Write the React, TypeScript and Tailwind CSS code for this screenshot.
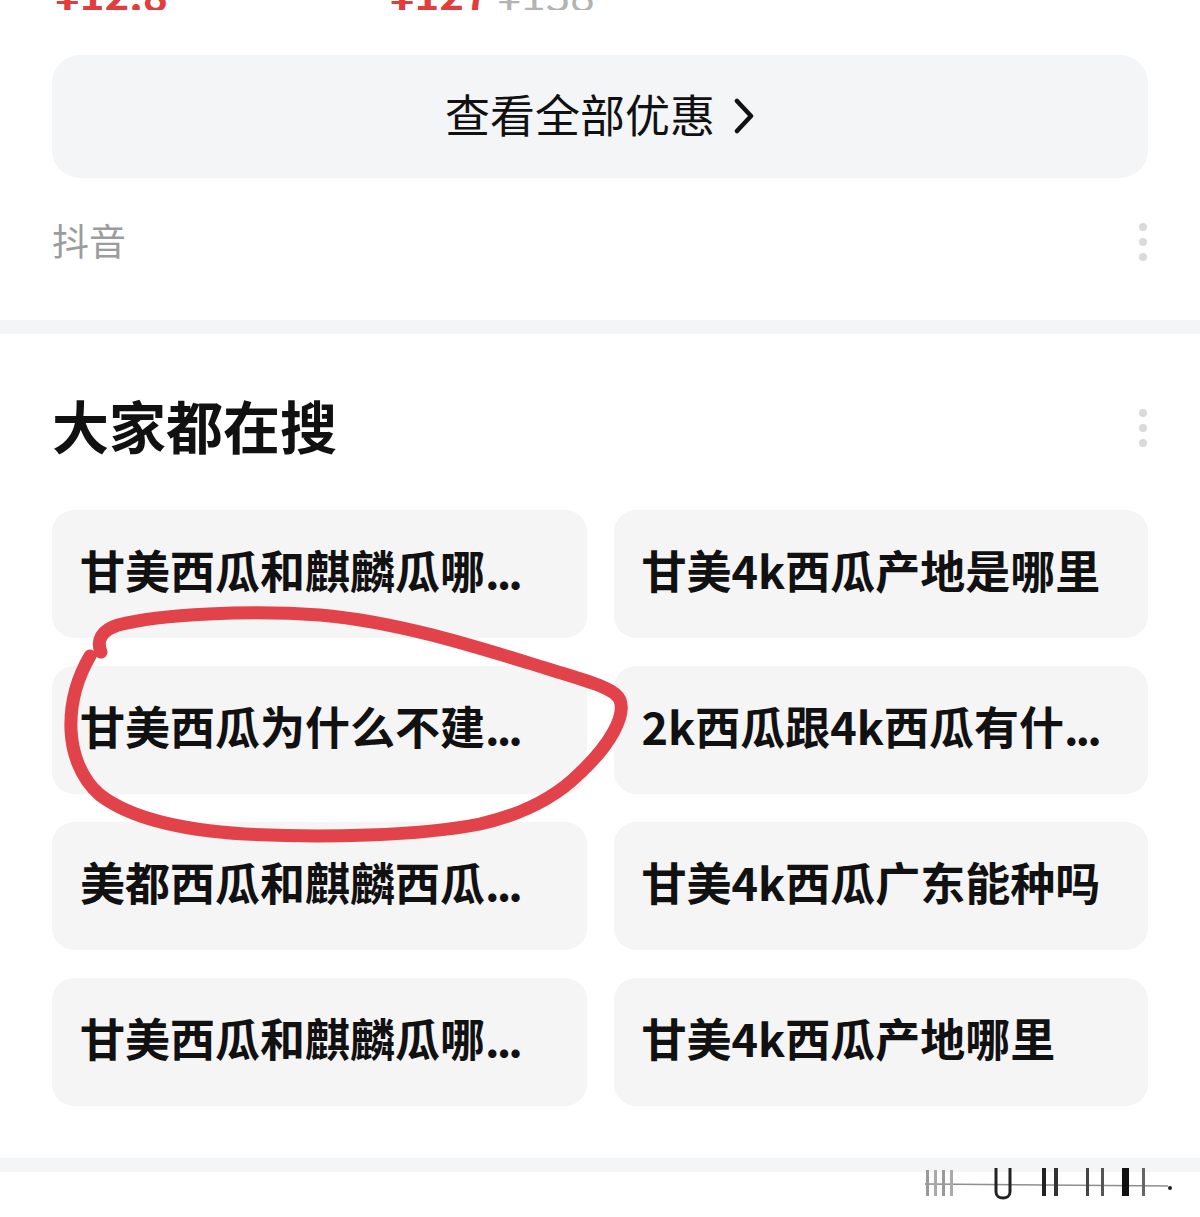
import React from "react";

const items = [
  { text: "甘美西瓜和麒麟瓜哪", more: true },
  { text: "甘美4k西瓜产地是哪里", more: false },
  { text: "甘美西瓜为什么不建", more: true },
  { text: "2k西瓜跟4k西瓜有什", more: true },
  { text: "美都西瓜和麒麟西瓜", more: true },
  { text: "甘美4k西瓜广东能种吗", more: false },
  { text: "甘美西瓜和麒麟瓜哪", more: true },
  { text: "甘美4k西瓜产地哪里", more: false },
];

const MoreDots = () => (
  <div className="flex flex-col items-center gap-[7px] pr-[1px]">
    <span className="block w-[8px] h-[8px] rounded-full bg-[#dadadd]" />
    <span className="block w-[8px] h-[8px] rounded-full bg-[#dadadd]" />
    <span className="block w-[8px] h-[8px] rounded-full bg-[#dadadd]" />
  </div>
);

const App = () => {
  return (
    <div
      className="relative w-[1200px] h-[1217px] bg-white overflow-hidden"
      style={{ fontFamily: "'Noto Sans CJK SC', 'Noto Sans', sans-serif" }}
    >
      <div className="px-[52px]">
        {/* PRICE STRIP (cut off by the screenshot) */}
        <div className="h-[10px] overflow-hidden">
          <div className="-mt-[29px] flex items-baseline leading-[42px]">
            <span className="ml-[3px] text-[42px] font-bold text-[#e03e3e]">¥12.8</span>
            <span className="ml-[222px] text-[42px] font-bold text-[#e03e3e]">¥127</span>
            <span className="ml-[8px] text-[44px] text-[#b3b3b3]">¥138</span>
          </div>
        </div>

        {/* BUTTON */}
        <div className="mt-[45px] h-[123px] rounded-[28px] bg-[#f4f5f7] flex items-center justify-center gap-[18px]">
          <span className="text-[45px] text-[#111] -mt-[5px]">查看全部优惠</span>
          <svg width="22" height="36" viewBox="0 0 22 36" className="-mt-[2px]">
            <path d="M4 3 L18 18 L4 33" fill="none" stroke="#111" strokeWidth="4.5" strokeLinecap="round" strokeLinejoin="round" />
          </svg>
        </div>

        {/* SOURCE */}
        <div className="mt-[40px] h-[48px] flex items-center justify-between">
          <span className="text-[37px] text-[#9c9c9c] -mt-[2px]">抖音</span>
          <MoreDots />
        </div>
      </div>

      {/* DIVIDER */}
      <div className="mt-[54px] h-[14px] bg-[#f4f5f7]" />

      <div className="px-[52px]">
        {/* HEADER */}
        <div className="mt-[64px] h-[60px] flex items-center justify-between">
          <h2 className="text-[57px] font-bold text-[#111] leading-none -mt-[8px]">大家都在搜</h2>
          <MoreDots />
        </div>

        {/* GRID */}
        <div className="mt-[52px] grid grid-cols-2 gap-x-[27px] gap-y-[28px]">
          {items.map((it, i) => (
            <div
              key={i}
              className="h-[128px] rounded-[22px] bg-[#f5f5f6] flex items-center pl-[28px] pb-[9px]"
            >
              <span className="text-[45px] font-bold text-[#111] whitespace-nowrap leading-none">
                {it.text}
                {it.more && <span className="tracking-[-3px]">...</span>}
              </span>
            </div>
          ))}
        </div>
      </div>

      {/* DIVIDER */}
      <div className="mt-[52px] h-[14px] bg-[#f4f5f7]" />

      {/* RED MARKER */}
      <svg
        className="absolute left-0 top-0 pointer-events-none"
        width="1200"
        height="1217"
        viewBox="0 0 1200 1217"
      >
        <path
          d="M101 652 C 96 640, 102 630, 118 625 C 160 614, 250 610, 320 615 C 400 622, 480 648, 545 668 C 590 682, 615 688, 620 700 C 626 716, 610 745, 580 773 C 555 798, 520 815, 480 824 C 420 836, 320 838, 245 834 C 180 830, 130 818, 100 795 C 80 778, 72 752, 71 730 C 70 705, 76 680, 90 656"
          fill="none"
          stroke="#e2434a"
          strokeWidth="13"
          strokeLinecap="round"
          strokeLinejoin="round"
        />
      </svg>

      {/* WATERMARK SCRAP */}
      <svg
        className="absolute left-[920px] top-[1162px] pointer-events-none"
        width="260"
        height="40"
        viewBox="0 0 260 40"
      >
        <line x1="5" y1="22" x2="248" y2="24" stroke="#444" strokeWidth="1.5" opacity="0.6" />
        <rect x="6" y="8" width="3" height="26" fill="#999" />
        <rect x="14" y="8" width="3" height="26" fill="#aaa" />
        <rect x="22" y="8" width="3" height="26" fill="#999" />
        <rect x="30" y="8" width="3" height="26" fill="#aaa" />
        <path d="M76 6 L76 30 C76 38, 90 38, 90 30 L90 6" fill="none" stroke="#222" strokeWidth="3" />
        <rect x="122" y="6" width="4" height="28" fill="#222" />
        <rect x="134" y="6" width="4" height="28" fill="#333" />
        <rect x="166" y="6" width="3" height="28" fill="#444" />
        <rect x="181" y="6" width="3" height="28" fill="#555" />
        <rect x="202" y="6" width="7" height="28" fill="#111" />
        <rect x="222" y="6" width="3" height="28" fill="#666" />
        <circle cx="250" cy="26" r="2" fill="#222" />
      </svg>
    </div>
  );
};

export default App;
